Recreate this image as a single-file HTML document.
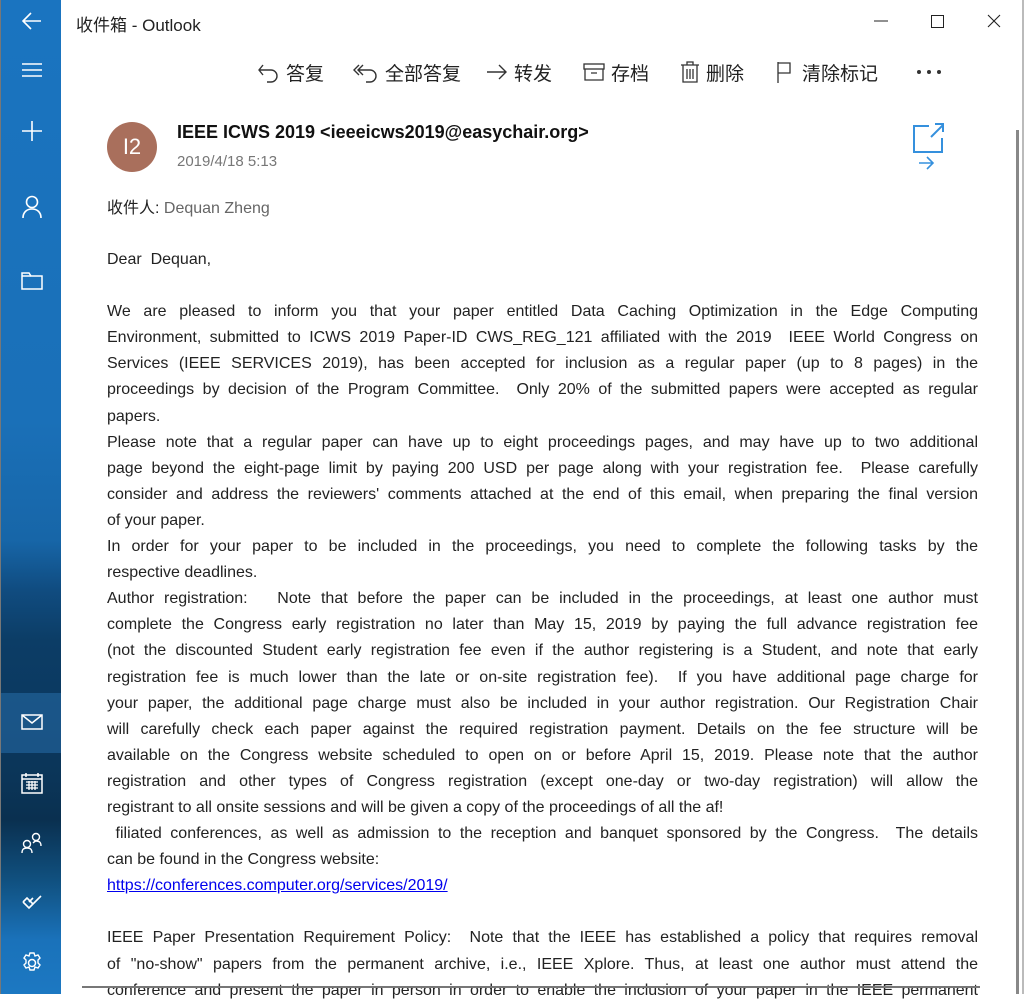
<!DOCTYPE html>
<html><head><meta charset="utf-8"><style>
*{margin:0;padding:0;box-sizing:border-box}
body{width:1024px;height:994px;overflow:hidden;background:#fff;font-family:"Segoe UI","Liberation Sans","Noto Sans CJK SC",sans-serif;color:#1a1a1a;position:relative}
#side{position:absolute;left:0;top:0;width:61px;height:994px;border-left:1px solid #777;background:linear-gradient(180deg,#1a74c0 0px,#1a70b8 420px,#1766a8 540px,#104c80 590px,#0c3d66 640px,#0b3a62 690px,#0b3558 780px,#0a3050 820px,#10507f 880px,#1a72ba 940px,#1c78c2 994px)}
#side .sel{position:absolute;left:0;top:693px;width:60px;height:60px;background:rgba(40,110,170,.55)}
#side svg{position:absolute;left:20px}
#title{position:absolute;left:76px;top:11px;font-size:17px;color:#222}
#tb{position:absolute;top:59px;left:258px;font-size:19px;color:#222;white-space:nowrap}
#tb span{position:absolute;top:0;white-space:nowrap}
#tb svg{vertical-align:-3px;margin-right:6px}
#av{position:absolute;left:107px;top:122px;width:50px;height:50px;border-radius:50%;background:#a96f5c;color:#fff;font-size:22px;text-align:center;line-height:50px}
#from{position:absolute;left:177px;top:122px;font-size:18px;font-weight:bold;color:#111}
#date{position:absolute;left:177px;top:153px;font-size:15px;color:#777}
#to{position:absolute;left:107px;top:194px;font-size:16px;color:#222}
#to span{color:#666}
#body{position:absolute;left:107px;top:247px;width:871px;font-size:16px;line-height:26.1px;color:#222}
#body div{text-align:justify;text-align-last:justify;white-space:nowrap;height:26.1px;overflow:visible}
#body div.l{text-align-last:left}
a{color:#0000ee}
#scroll{position:absolute;left:1016px;top:130px;width:3px;height:864px;background:#888}
#rb{position:absolute;right:0;top:0;width:2px;height:994px;background:#bbb}
</style></head><body>
<div id="side"><div class="sel"></div>
<svg style="top:11px" width="22" height="20" viewBox="0 0 22 20"><path d="M20 10H2M10 2L2 10l8 8" fill="none" stroke="#fff" stroke-width="1.6"/></svg>
<svg style="top:62px" width="22" height="16"><path d="M1 2h20M1 8h20M1 14h20" stroke="#fff" stroke-width="1.6"/></svg>
<svg style="top:120px" width="22" height="22"><path d="M11 1v20M1 11h20" stroke="#fff" stroke-width="1.6"/></svg>
<svg style="top:195px" width="22" height="24"><circle cx="11" cy="7" r="5.5" fill="none" stroke="#fff" stroke-width="1.6"/><path d="M2 23c0-6 4-9 9-9s9 3 9 9" fill="none" stroke="#fff" stroke-width="1.6"/></svg>
<svg style="top:272px" width="22" height="18"><path d="M1 1h7l2 3h11v13H1z" fill="none" stroke="#fff" stroke-width="1.5"/><path d="M1 4h9" stroke="#fff" stroke-width="1.5"/></svg>
<svg style="top:714px" width="22" height="16"><rect x="1" y="1" width="20" height="14" fill="none" stroke="#fff" stroke-width="1.5"/><path d="M1 1l10 8 10-8" fill="none" stroke="#fff" stroke-width="1.5"/></svg>
<svg style="top:772px" width="22" height="22"><rect x="1" y="3" width="20" height="18" fill="none" stroke="#fff" stroke-width="1.5"/><path d="M1 7h20M5 1v4M17 1v4" stroke="#fff" stroke-width="1.5"/><path d="M5 10h12M5 13h12M5 16h12M8 9v9M11 9v9M14 9v9" stroke="#fff" stroke-width="1.3"/></svg>
<svg style="top:832px" width="22" height="22"><circle cx="6" cy="12" r="3.5" fill="none" stroke="#fff" stroke-width="1.4"/><path d="M1 21c0-4 2-5 5-5s5 1 5 5" fill="none" stroke="#fff" stroke-width="1.4"/><circle cx="15" cy="5" r="3.5" fill="none" stroke="#fff" stroke-width="1.4"/><path d="M12 11c1-1 2-2 3-2 3 0 5 1 5 5" fill="none" stroke="#fff" stroke-width="1.4"/></svg>
<svg style="top:892px" width="22" height="20"><path d="M2 10l6 6 12-12M8 10l4-4" fill="none" stroke="#fff" stroke-width="1.6"/><path d="M2 10l4-4 6 6" fill="none" stroke="#fff" stroke-width="1.6"/></svg>
<svg style="top:952px" width="22" height="22" viewBox="0 0 22 22"><circle cx="11" cy="11" r="3.5" fill="none" stroke="#fff" stroke-width="1.5"/><path d="M9 1h4l1 3 3-1 2 3-2 2 0 3 2 2-2 3-3-1-1 3H9l-1-3-3 1-2-3 2-2V8L3 6l2-3 3 1z" fill="none" stroke="#fff" stroke-width="1.4"/></svg>
</div>
<div id="title">收件箱 - Outlook</div>
<svg style="position:absolute;left:874px;top:20px" width="14" height="2"><path d="M0 1h14" stroke="#222"/></svg>
<svg style="position:absolute;left:931px;top:15px" width="13" height="13"><rect x=".5" y=".5" width="12" height="12" fill="none" stroke="#222"/></svg>
<svg style="position:absolute;left:987px;top:14px" width="14" height="14"><path d="M1 1l12 12M13 1L1 13" stroke="#222" stroke-width="1.1"/></svg>
<div id="tb">
<span style="left:0"><svg width="22" height="22"><path d="M5 4L1 9l4 5M1 9h12a6 6 0 0 1 0 12H9" fill="none" stroke="#333" stroke-width="1.4"/></svg>答复</span>
<span style="left:95px"><svg width="26" height="22"><path d="M8 4L3 9l5 5M4 4L-1 9l5 5M3 9h12a6 6 0 0 1 0 12h-4" fill="none" stroke="#333" stroke-width="1.4" transform="translate(2 0)"/></svg>全部答复</span>
<span style="left:228px"><svg width="22" height="22"><path d="M1 11h19M13 4l7 7-7 7" fill="none" stroke="#333" stroke-width="1.4"/></svg>转发</span>
<span style="left:325px"><svg width="22" height="22"><rect x="1" y="3" width="20" height="5" fill="none" stroke="#333" stroke-width="1.3"/><path d="M2 8v11h18V8M8 12h6" fill="none" stroke="#333" stroke-width="1.3"/></svg>存档</span>
<span style="left:422px"><svg width="20" height="22"><path d="M1 4h18M7 4V1h6v3M3 4v17h14V4M7 8v10M10 8v10M13 8v10" fill="none" stroke="#333" stroke-width="1.3"/></svg>删除</span>
<span style="left:518px"><svg width="20" height="22"><path d="M2 1v21M2 2h12v10H2" fill="none" stroke="#333" stroke-width="1.3"/></svg>清除标记</span>
</div>
<svg style="position:absolute;left:916px;top:69px" width="26" height="6"><circle cx="3" cy="3" r="2" fill="#333"/><circle cx="13" cy="3" r="2" fill="#333"/><circle cx="23" cy="3" r="2" fill="#333"/></svg>
<div id="av">I2</div>
<div id="from">IEEE ICWS 2019 &lt;ieeeicws2019@easychair.org&gt;</div>
<div id="date">2019/4/18 5:13</div>
<svg style="position:absolute;left:913px;top:123px" width="32" height="48"><path d="M16 3H1v26h28V15M18 14L30 2M22 1h8v8" fill="none" stroke="#3590dd" stroke-width="2"/><path d="M6 40h14M14 34l6 6-6 6" fill="none" stroke="#3590dd" stroke-width="1.6"/></svg>
<div id="to">收件人: <span>Dequan Zheng</span></div>
<div id="body">
<div class="l">Dear&nbsp; Dequan,</div>
<div class="l">&nbsp;</div>
<div>We are pleased to inform you that your paper entitled Data Caching Optimization in the Edge Computing</div>
<div>Environment, submitted to ICWS 2019 Paper-ID CWS_REG_121 affiliated with the 2019&nbsp; IEEE World Congress on</div>
<div>Services (IEEE SERVICES 2019), has been accepted for inclusion as a regular paper (up to 8 pages) in the</div>
<div>proceedings by decision of the Program Committee.&nbsp; Only 20% of the submitted papers were accepted as regular</div>
<div class="l">papers.</div>
<div>Please note that a regular paper can have up to eight proceedings pages, and may have up to two additional</div>
<div>page beyond the eight-page limit by paying 200 USD per page along with your registration fee.&nbsp; Please carefully</div>
<div>consider and address the reviewers' comments attached at the end of this email, when preparing the final version</div>
<div class="l">of your paper.</div>
<div>In order for your paper to be included in the proceedings, you need to complete the following tasks by the</div>
<div class="l">respective deadlines.</div>
<div>Author registration:&nbsp;&nbsp; Note that before the paper can be included in the proceedings, at least one author must</div>
<div>complete the Congress early registration no later than May 15, 2019 by paying the full advance registration fee</div>
<div>(not the discounted Student early registration fee even if the author registering is a Student, and note that early</div>
<div>registration fee is much lower than the late or on-site registration fee).&nbsp; If you have additional page charge for</div>
<div>your paper, the additional page charge must also be included in your author registration. Our Registration Chair</div>
<div>will carefully check each paper against the required registration payment. Details on the fee structure will be</div>
<div>available on the Congress website scheduled to open on or before April 15, 2019. Please note that the author</div>
<div>registration and other types of Congress registration (except one-day or two-day registration) will allow the</div>
<div class="l">registrant to all onsite sessions and will be given a copy of the proceedings of all the af!</div>
<div>&nbsp;filiated conferences, as well as admission to the reception and banquet sponsored by the Congress.&nbsp; The details</div>
<div class="l">can be found in the Congress website:</div>
<div class="l"><a href="#">https://conferences.computer.org/services/2019/</a></div>
<div class="l">&nbsp;</div>
<div>IEEE Paper Presentation Requirement Policy:&nbsp; Note that the IEEE has established a policy that requires removal</div>
<div>of "no-show" papers from the permanent archive, i.e., IEEE Xplore. Thus, at least one author must attend the</div>
<div>conference and present the paper in person in order to enable the inclusion of your paper in the IEEE permanent</div>
</div>
<div style="position:absolute;left:82px;top:986px;width:898px;height:2px;background:#777"></div>
<div id="scroll"></div>
<div id="rb"></div>
</body></html>
